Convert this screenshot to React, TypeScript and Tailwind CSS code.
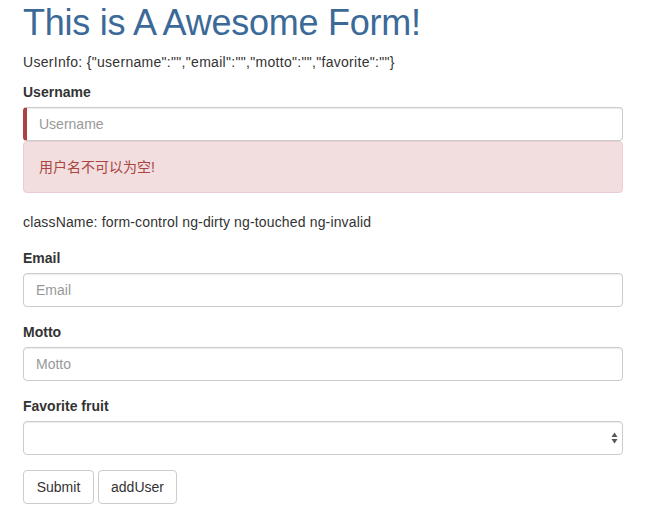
import React from 'react';

const font = { fontFamily: '"Liberation Sans", "Noto Sans CJK SC", sans-serif' };

const inputCls =
  'block w-full h-[34px] px-3 text-[14px] text-[#555] bg-white border border-[#ccc] rounded-[4px] shadow-[inset_0_1px_1px_rgba(0,0,0,0.075)] placeholder:text-[#999] outline-none';

const Label: React.FC<{ text: string; className?: string }> = ({ text, className }) => (
  <label className={`block text-[14px] leading-5 font-bold text-[#333] mb-[5px] ${className ?? ''}`}>{text}</label>
);

const App: React.FC = () => {
  return (
    <div className="min-h-[519px] bg-white text-[#333] pl-[23px]" style={font}>
      <div className="w-[600px]">
        <h1 className="pt-[3px] text-[36px] leading-[40px] tracking-[-0.25px] text-[#3b6998] font-normal">
          This is A Awesome Form!
        </h1>
        <p className="mt-[9px] text-[14px] leading-5 tracking-[0.3px]">
          UserInfo: {'{"username":"","email":"","motto":"","favorite":""}'}
        </p>

        <Label text="Username" className="mt-[10px]" />
        <input
          type="text"
          placeholder="Username"
          className="block w-full h-[34px] pl-3 pr-3 text-[14px] bg-white border border-[#ccc] border-l-[4px] border-l-[#a94442] rounded-[4px] shadow-[inset_0_1px_1px_rgba(0,0,0,0.075)] placeholder:text-[#999] outline-none"
        />
        <div className="h-[52px] flex items-center px-[15px] bg-[#f2dede] border border-[#ebccd1] rounded-[4px] text-[#a94442] text-[14px]">
          用户名不可以为空!
        </div>

        <p className="mt-[19px] text-[14px] leading-5 tracking-[0.15px]">
          className: form-control ng-dirty ng-touched ng-invalid
        </p>

        <Label text="Email" className="mt-[16px]" />
        <input type="text" placeholder="Email" className={inputCls} />

        <Label text="Motto" className="mt-[15px]" />
        <input type="text" placeholder="Motto" className={inputCls} />

        <Label text="Favorite fruit" className="mt-[15px]" />
        <div className="relative h-[34px] bg-white border border-[#ccc] rounded-[4px] shadow-[inset_0_1px_1px_rgba(0,0,0,0.075)]">
          <svg className="absolute right-[4px] top-[10px]" width="7" height="12" viewBox="0 0 7 12">
            <path d="M3.5 0.5 L6.5 5 L0.5 5 Z" fill="#555" />
            <path d="M3.5 11.5 L6.5 7 L0.5 7 Z" fill="#555" />
          </svg>
        </div>

        <div className="mt-[15px] flex gap-[4px]">
          <button className="h-[34px] w-[71px] bg-white border border-[#ccc] rounded-[4px] text-[14px] text-[#333]">Submit</button>
          <button className="h-[34px] w-[79px] bg-white border border-[#ccc] rounded-[4px] text-[14px] text-[#333]">addUser</button>
        </div>
      </div>
    </div>
  );
};

export default App;
